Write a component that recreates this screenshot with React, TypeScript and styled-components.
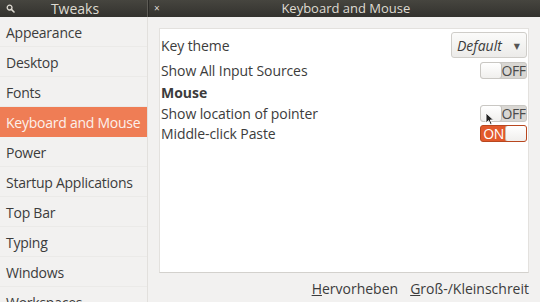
import React from 'react';
import styled, { createGlobalStyle } from 'styled-components';

const GlobalStyle = createGlobalStyle`
  html, body {
    margin: 0;
    padding: 0;
    overflow: hidden;
    background: #f2f1f0;
  }
  body {
    font-family: "Open Sans", "DejaVu Sans", sans-serif;
    color: #3c3c3c;
  }
`

const pages = [
  'Appearance',
  'Desktop',
  'Fonts',
  'Keyboard and Mouse',
  'Power',
  'Startup Applications',
  'Top Bar',
  'Typing',
  'Windows',
  'Workspaces',
]

const SearchIcon: React.FC = () => (
  <svg width="9" height="9" viewBox="0 0 9 9">
    <circle cx="3.6" cy="3.6" r="2.4" fill="none" stroke="#dfdbd2" strokeWidth="1.3" />
    <line x1="5.4" y1="5.4" x2="8" y2="8" stroke="#dfdbd2" strokeWidth="1.6" strokeLinecap="round" />
  </svg>
)

const Switch: React.FC<{ on: boolean }> = ({ on }) => (
  <SwitchBox on={on}>
    {on ? <SwitchLabel on>ON</SwitchLabel> : <Knob />}
    {on ? <Knob /> : <SwitchLabel on={false}>OFF</SwitchLabel>}
  </SwitchBox>
)

export default function App() {
  return (
    <Window>
      <GlobalStyle />
      <TitleBar>
        <SideHeader>
          <SearchIcon />
          <HeaderTitle>Tweaks</HeaderTitle>
        </SideHeader>
        <MainHeader>
          <Close>×</Close>
          <HeaderTitle small>Keyboard and Mouse</HeaderTitle>
        </MainHeader>
      </TitleBar>
      <Body>
        <Sidebar>
          {pages.map((p) => (
            <SideItem key={p} selected={p === 'Keyboard and Mouse'}>
              {p}
            </SideItem>
          ))}
        </Sidebar>
        <Main>
          <Panel>
            <Row height={26} top={3}>
              <Label>Key theme</Label>
              <Combo>
                <ComboText>Default</ComboText>
                <Arrow>▼</Arrow>
              </Combo>
            </Row>
            <Row height={24}>
              <Label>Show All Input Sources</Label>
              <Switch on={false} />
            </Row>
            <Row height={21}>
              <Heading>Mouse</Heading>
            </Row>
            <Row height={20}>
              <Label>Show location of pointer</Label>
              <Switch on={false} />
              <Pointer viewBox="0 0 10 14" width="10" height="14">
                <path d="M1 1 L1 11 L3.6 8.6 L5.4 12.6 L7 11.9 L5.3 8 L8.6 8 Z" fill="#222" stroke="#fff" strokeWidth="0.9" />
              </Pointer>
            </Row>
            <Row height={20}>
              <Label>Middle-click Paste</Label>
              <Switch on />
            </Row>
          </Panel>
          <Footer>
            <Shortcut><u>H</u>ervorheben</Shortcut>
            <Shortcut><u>G</u>roß-/Kleinschreit</Shortcut>
          </Footer>
        </Main>
      </Body>
    </Window>
  )
}

const Window = styled.div`
  width: 540px;
  height: 302px;
  display: flex;
  flex-direction: column;
  overflow: hidden;
`

const TitleBar = styled.div`
  height: 17px;
  display: flex;
  background: linear-gradient(#46453f, #33322e);
  color: #dfdbd2;
  flex-shrink: 0;
`

const SideHeader = styled.div`
  width: 148px;
  display: flex;
  align-items: center;
  padding-left: 6px;
  box-sizing: border-box;
  border-right: 1px solid #5e5c56;
`

const MainHeader = styled.div`
  flex: 1;
  display: flex;
  align-items: center;
  padding-left: 5px;
  border-left: 1px solid #2a2926;
`

const HeaderTitle = styled.div<{ small?: boolean }>`
  flex: 1;
  text-align: center;
  font-size: ${(p) => (p.small ? '13px' : '14px')};
  line-height: 17px;
  padding-right: ${(p) => (p.small ? '8px' : '12px')};
`

const Close = styled.span`
  font-size: 10px;
  line-height: 17px;
  color: #dfdbd2;
`

const Body = styled.div`
  flex: 1;
  display: flex;
  min-height: 0;
`

const Sidebar = styled.div`
  width: 148px;
  border-right: 1px solid #e2e0dd;
  box-sizing: border-box;
  flex-shrink: 0;
`

const SideItem = styled.div<{ selected?: boolean }>`
  height: 30px;
  box-sizing: border-box;
  padding: 1px 0 0 6px;
  line-height: 29px;
  font-size: 14px;
  letter-spacing: -0.25px;
  white-space: nowrap;
  color: ${(p) => (p.selected ? '#fcf1ec' : '#3c3c3c')};
  background: ${(p) => (p.selected ? '#ef7d55' : 'transparent')};
  border-bottom: 1px solid ${(p) => (p.selected ? '#ef7d55' : '#ebeae8')};
`

const Main = styled.div`
  flex: 1;
  display: flex;
  flex-direction: column;
  padding: 11px 11px 0 11px;
  min-width: 0;
`

const Panel = styled.div`
  height: 245px;
  background: #ffffff;
  border: 1px solid #e3e1de;
  border-bottom-color: #d3d1cd;
  box-sizing: border-box;
  display: flex;
  flex-direction: column;
  padding-right: 1px;
`

const Row = styled.div<{ height: number; top?: number }>`
  height: ${(p) => p.height}px;
  margin-top: ${(p) => p.top ?? 0}px;
  display: flex;
  align-items: center;
  justify-content: space-between;
  padding-left: 1px;
  position: relative;
`

const Label = styled.span`
  font-size: 14px;
  letter-spacing: -0.1px;
`

const Heading = styled.span`
  font-size: 14px;
  font-weight: bold;
`

const Combo = styled.div`
  width: 76px;
  height: 26px;
  box-sizing: border-box;
  border: 1px solid #cfcdc9;
  border-radius: 3px;
  background: linear-gradient(#fbfbfa, #ecebe9);
  display: flex;
  align-items: center;
  padding-left: 5px;
`

const ComboText = styled.span`
  font-style: italic;
  font-size: 14px;
  flex: 1;
`

const Arrow = styled.span`
  font-size: 8px;
  color: #555;
  padding-right: 6px;
`

const SwitchBox = styled.div<{ on: boolean }>`
  width: 47px;
  height: 17px;
  box-sizing: border-box;
  border: 1px solid ${(p) => (p.on ? '#b8471f' : '#c9c7c3')};
  border-radius: 3px;
  background: ${(p) => (p.on ? '#e2592b' : '#d9d7d3')};
  display: flex;
  align-items: stretch;
  overflow: hidden;
`

const Knob = styled.div`
  width: 22px;
  background: linear-gradient(#ffffff, #f0efed);
  border: 1px solid #c2c0bc;
  border-radius: 3px;
  box-sizing: border-box;
  margin: -1px;
`

const SwitchLabel = styled.span<{ on: boolean }>`
  flex: 1;
  font-size: 14px;
  line-height: 15px;
  text-align: center;
  color: ${(p) => (p.on ? '#ffffff' : '#4a4a4a')};
  letter-spacing: -0.5px;
  white-space: nowrap;
`

const Pointer = styled.svg`
  position: absolute;
  left: 325px;
  top: 9px;
`

const Footer = styled.div`
  flex: 1;
  display: flex;
  justify-content: flex-end;
  align-items: center;
  gap: 12px;
  padding-top: 2px;
`

const Shortcut = styled.span`
  font-size: 14px;
  white-space: nowrap;
`
